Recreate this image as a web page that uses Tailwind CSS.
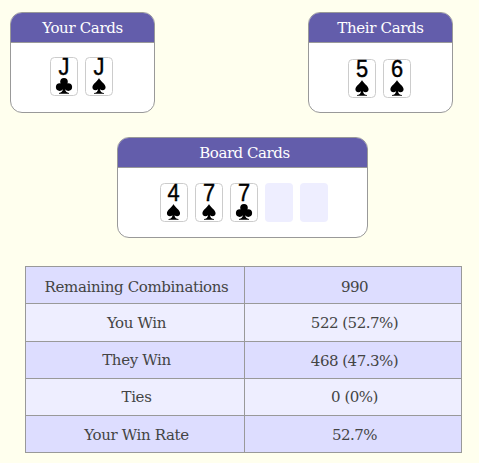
<!DOCTYPE html>
<html lang="en">
<head>
<meta charset="utf-8">
<title>Card Odds</title>
<script src="https://cdn.jsdelivr.net/npm/@tailwindcss/browser@4"></script>
</head>
<body class="bg-[#ffffee] w-[479px] h-[463px] overflow-hidden font-['DejaVu_Serif',serif] text-[15px] text-[#444]">
<svg class="hidden">
  <symbol id="spade" viewBox="0 0 28 16"><path d="M14 0C14.8 2.6 20.6 6 20.6 9.3C20.6 12.6 16.8 13 15 11.2C15.2 13.6 16.6 14.8 19 15V15.8H9V15C11.4 14.8 12.8 13.6 13 11.2C11.2 13 7.4 12.6 7.4 9.3C7.4 6 13.2 2.6 14 0Z"/></symbol>
  <symbol id="club" viewBox="0 0 28 16"><circle cx="14" cy="3.8" r="3.8"/><circle cx="9.7" cy="9.1" r="3.8"/><circle cx="18.3" cy="9.1" r="3.8"/><path d="M12.6 6H15.4L16 9.5L15 10.5C15.2 13.3 16.6 14.7 19 15V15.8H9V15C11.4 14.7 12.8 13.3 13 10.5L12 9.5Z"/></symbol>
</svg>
<div class="pt-3 pl-[10px] pr-[26px] flex justify-between">
  <section class="w-[145px] h-[101px] border border-[#999] rounded-xl bg-white overflow-hidden">
    <h2 class="h-[30px] bg-[#635dab] border-b border-[#999] text-white text-center leading-[31px] tracking-[-0.35px]">Your Cards</h2>
    <div class="pt-[14px] pl-[39px] flex gap-[7px]">
      <svg width="28" height="39" class="block overflow-visible"><rect x=".5" y=".5" width="27" height="38" rx="4" fill="#fff" stroke="#ccc"/><text transform="translate(14 18) scale(.95 1)" text-anchor="middle" font-family="Liberation Sans, sans-serif" font-size="23" stroke="#000" stroke-width=".4">J</text><use href="#club" y="21" width="28" height="16"/></svg>
      <svg width="28" height="39" class="block overflow-visible"><rect x=".5" y=".5" width="27" height="38" rx="4" fill="#fff" stroke="#ccc"/><text transform="translate(14 17.5) scale(.95 1)" text-anchor="middle" font-family="Liberation Sans, sans-serif" font-size="23" stroke="#000" stroke-width=".4">J</text><use href="#spade" y="21" width="28" height="16"/></svg>
    </div>
  </section>
  <section class="w-[145px] h-[101px] border border-[#999] rounded-xl bg-white overflow-hidden">
    <h2 class="h-[30px] bg-[#635dab] border-b border-[#999] text-white text-center leading-[31px] tracking-[-0.35px]">Their Cards</h2>
    <div class="pt-4 pl-[39px] flex gap-[7px]">
      <svg width="28" height="39" class="block overflow-visible"><rect x=".5" y=".5" width="27" height="38" rx="4" fill="#fff" stroke="#ccc"/><text transform="translate(14 17.8) scale(.95 1)" text-anchor="middle" font-family="Liberation Sans, sans-serif" font-size="23" stroke="#000" stroke-width=".4">5</text><use href="#spade" y="21" width="28" height="16"/></svg>
      <svg width="28" height="39" class="block overflow-visible"><rect x=".5" y=".5" width="27" height="38" rx="4" fill="#fff" stroke="#ccc"/><text transform="translate(14 17.8) scale(.95 1)" text-anchor="middle" font-family="Liberation Sans, sans-serif" font-size="23" stroke="#000" stroke-width=".4">6</text><use href="#spade" y="21" width="28" height="16"/></svg>
    </div>
  </section>
</div>
<section class="mt-6 ml-[117px] w-[251px] h-[101px] border border-[#999] rounded-xl bg-white overflow-hidden">
  <h2 class="h-[30px] bg-[#635dab] border-b border-[#999] text-white text-center leading-[31px] tracking-[-0.45px] pl-1">Board Cards</h2>
  <div class="pt-[15px] pl-[42px] flex gap-[7px]">
    <svg width="28" height="39" class="block overflow-visible"><rect x=".5" y=".5" width="27" height="38" rx="4" fill="#fff" stroke="#ccc"/><text transform="translate(13.5 18) scale(.95 1)" text-anchor="middle" font-family="Liberation Sans, sans-serif" font-size="23" stroke="#000" stroke-width=".4">4</text><use href="#spade" x="-.5" y="21" width="28" height="16"/></svg>
    <svg width="28" height="39" class="block overflow-visible"><rect x=".5" y=".5" width="27" height="38" rx="4" fill="#fff" stroke="#ccc"/><text transform="translate(14 18) scale(.95 1)" text-anchor="middle" font-family="Liberation Sans, sans-serif" font-size="23" stroke="#000" stroke-width=".4">7</text><use href="#spade" y="21" width="28" height="16"/></svg>
    <svg width="28" height="39" class="block overflow-visible"><rect x=".5" y=".5" width="27" height="38" rx="4" fill="#fff" stroke="#ccc"/><text transform="translate(14 18) scale(.95 1)" text-anchor="middle" font-family="Liberation Sans, sans-serif" font-size="23" stroke="#000" stroke-width=".4">7</text><use href="#club" y="21" width="28" height="16"/></svg>
    <div class="w-7 h-[39px] rounded bg-[#eeeeff]"></div>
    <div class="w-7 h-[39px] rounded bg-[#eeeeff]"></div>
  </div>
</section>
<div class="mt-7 ml-[25px] w-[437px] border border-[#999] bg-[#999] grid grid-cols-[218px_216px] grid-rows-[36px_37px_36px_36px_36px] gap-px text-center leading-[37px] tracking-[-0.35px] *:overflow-hidden">
  <div class="bg-[#ddddff] pt-0.5 pl-[3px]">Remaining Combinations</div><div class="bg-[#ddddff] pt-0.5 pl-[3px] tracking-[-0.5px]">990</div>
  <div class="bg-[#eeeeff] pt-px pl-[3px]">You Win</div><div class="bg-[#eeeeff] pt-px pl-[3px] tracking-[-0.5px]">522 (52.7%)</div>
  <div class="bg-[#ddddff] pl-[3px]">They Win</div><div class="bg-[#ddddff] pt-px pl-[3px] tracking-[-0.5px]">468 (47.3%)</div>
  <div class="bg-[#eeeeff] pl-[3px]">Ties</div><div class="bg-[#eeeeff] pl-[3px] tracking-[-0.5px]">0 (0%)</div>
  <div class="bg-[#ddddff] pt-px pl-[3px]">Your Win Rate</div><div class="bg-[#ddddff] pt-px pl-[3px] tracking-[-0.5px]">52.7%</div>
</div>
</body>
</html>
